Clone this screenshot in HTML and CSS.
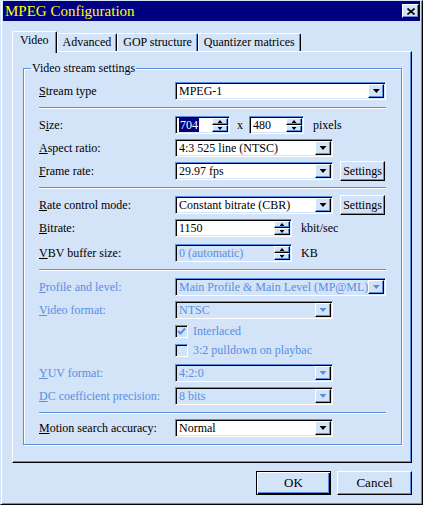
FILE: index.html
```html
<!DOCTYPE html>
<html lang="en">
<head>
  <meta charset="UTF-8">
  <title>MPEG Configuration</title>
  <link rel="stylesheet" href="styles.css">
</head>
<body>
  <div class="window">
    <div class="titlebar">
      <span class="title">MPEG Configuration</span>
      <span class="close">
        <svg width="8" height="7" viewBox="0 0 8 7"><path d="M0.5 0.5 L7.5 6.5 M7.5 0.5 L0.5 6.5" stroke="#000" stroke-width="1.6" fill="none"/></svg>
      </span>
    </div>

    <div class="tabs">
      <div class="tab active">Video</div>
      <div class="tab">Advanced</div>
      <div class="tab">GOP structure</div>
      <div class="tab">Quantizer matrices</div>
    </div>

    <div class="panel">
      <fieldset class="group">
        <legend>Video stream settings</legend>
        <div class="rows">
          <div class="row">
            <span class="lbl"><u>S</u>tream type</span>
            <div class="combo fill"><span class="value">MPEG-1</span><span class="drop"><i></i></span></div>
          </div>
          <div class="sep"></div>
          <div class="row">
            <span class="lbl">S<u>i</u>ze:</span>
            <div class="combo spin small"><span class="value"><span class="hl">704</span></span><span class="spinbtn"><span class="up"><i></i></span><span class="down"><i></i></span></span></div>
            <span class="times">x</span>
            <div class="combo spin small"><span class="value">480</span><span class="spinbtn"><span class="up"><i></i></span><span class="down"><i></i></span></span></div>
            <span class="unit">pixels</span>
          </div>
          <div class="row">
            <span class="lbl"><u>A</u>spect ratio:</span>
            <div class="combo mid"><span class="value">4:3 525 line (NTSC)</span><span class="drop"><i></i></span></div>
          </div>
          <div class="row">
            <span class="lbl"><u>F</u>rame rate:</span>
            <div class="combo mid"><span class="value">29.97 fps</span><span class="drop"><i></i></span></div>
            <span class="btn settings">Settings</span>
          </div>
          <div class="sep"></div>
          <div class="row">
            <span class="lbl"><u>R</u>ate control mode:</span>
            <div class="combo mid"><span class="value">Constant bitrate (CBR)</span><span class="drop"><i></i></span></div>
            <span class="btn settings">Settings</span>
          </div>
          <div class="row">
            <span class="lbl"><u>B</u>itrate:</span>
            <div class="combo spin long"><span class="value">1150</span><span class="spinbtn"><span class="up"><i></i></span><span class="down"><i></i></span></span></div>
            <span class="unit">kbit/sec</span>
          </div>
          <div class="row push2">
            <span class="lbl"><u>V</u>BV buffer size:</span>
            <div class="combo spin long off"><span class="value">0 (automatic)</span><span class="spinbtn"><span class="up"><i></i></span><span class="down"><i></i></span></span></div>
            <span class="unit">KB</span>
          </div>
          <div class="sep"></div>
          <div class="row dis">
            <span class="lbl"><u>P</u>rofile and level:</span>
            <div class="combo fill off"><span class="value">Main Profile &amp; Main Level (MP@ML)</span><span class="drop"><i></i></span></div>
          </div>
          <div class="row dis">
            <span class="lbl"><u>V</u>ideo format:</span>
            <div class="combo mid off"><span class="value">NTSC</span><span class="drop"><i></i></span></div>
          </div>
          <div class="row check dis">
            <span class="box"><svg width="9" height="9" viewBox="0 0 9 9"><path d="M1 4 L3.5 6.5 L8 1.5" stroke="#5a8fdf" stroke-width="2" fill="none"/></svg></span>
            <span>Interlaced</span>
          </div>
          <div class="row check dis">
            <span class="box"></span>
            <span>3:2 pulldown on playbac</span>
          </div>
          <div class="row dis push2">
            <span class="lbl"><u>Y</u>UV format:</span>
            <div class="combo mid off"><span class="value">4:2:0</span><span class="drop"><i></i></span></div>
          </div>
          <div class="row dis">
            <span class="lbl"><u>D</u>C coefficient precision:</span>
            <div class="combo mid off"><span class="value">8 bits</span><span class="drop"><i></i></span></div>
          </div>
          <div class="sep last"></div>
          <div class="row">
            <span class="lbl"><u>M</u>otion search accuracy:</span>
            <div class="combo mid"><span class="value">Normal</span><span class="drop"><i></i></span></div>
          </div>
        </div>
      </fieldset>
    </div>

    <div class="footer">
      <span class="btn big default">OK</span>
      <span class="btn big">Cancel</span>
    </div>
  </div>
</body>
</html>
```

FILE: styles.css
```css
* {
  box-sizing: border-box;
}
body {
  margin: 0;
  font-family: "Liberation Serif", serif;
  font-size: 12px;
  color: #000;
  background: #d3e3f8;
}
.window {
  width: 423px;
  height: 505px;
  background: #d3e3f8;
  border: 1px solid;
  border-color: #d3e3f8 #000 #000 #d3e3f8;
  box-shadow: inset 1px 0 #fff, inset -1px -1px #5a8fdf;
  padding: 0 2px;
}
.titlebar {
  height: 20px;
  background: #000080;
  display: flex;
  align-items: center;
  justify-content: space-between;
  padding: 0 1px 0 2px;
}
.title {
  color: #ffff00;
  font-size: 15px;
  line-height: 18px;
}
.close {
  width: 17px;
  height: 14px;
  display: flex;
  align-items: center;
  justify-content: center;
  background: #d3e3f8;
  border: 1px solid;
  border-color: #fff #000 #000 #fff;
  box-shadow: inset -1px -1px #5a8fdf;
}

/* tabs */
.tabs {
  display: flex;
  align-items: flex-end;
  height: 20px;
  margin-top: 10px;
  padding-left: 9px;
}
.tab {
  height: 18px;
  padding: 0 5px;
  line-height: 17px;
  border: 1px solid;
  border-bottom: none;
  border-color: #fff #000 transparent #fff;
  box-shadow: inset -1px 0 #5a8fdf;
  border-radius: 2px 2px 0 0;
  white-space: nowrap;
}
.tab.active {
  height: 22px;
  padding: 0 7px;
  line-height: 17px;
  margin-bottom: -2px;
  background: #d3e3f8;
  position: relative;
  z-index: 1;
}

.panel {
  margin-left: 9px;
  width: 400px;
  height: 412px;
  border: 1px solid;
  border-color: #fff #000 #000 #fff;
  box-shadow: inset -1px -1px #5a8fdf;
  padding: 9px 0 0 10px;
}
.group {
  margin: 0;
  padding: 0;
  width: 376px;
  height: 384px;
  border: 1px solid #5a8fdf;
  box-shadow: inset 1px 1px #fff, 1px 1px #fff;
}
.group legend {
  margin-left: 7px;
  padding: 0 1px;
  line-height: 14px;
}
.rows {
  display: flex;
  flex-direction: column;
  gap: 5px;
  padding: 7px 15px 0 15px;
}
.row {
  display: flex;
  align-items: center;
  height: 18px;
}
.row.push2 {
  margin-top: 2px;
}
.row.check {
  height: 14px;
  padding-left: 136px;
}
.lbl {
  width: 136px;
  flex: none;
  white-space: nowrap;
}
.dis {
  color: #5a8fdf;
}
.sep {
  height: 2px;
  margin: 2px 0;
  border-top: 1px solid #5a8fdf;
  border-bottom: 1px solid #fff;
}
.sep.last {
  margin-bottom: 0;
}

/* combo boxes and spin edits */
.combo {
  height: 18px;
  display: flex;
  background: #fff;
  border: 1px solid;
  border-color: #5a8fdf #fff #fff #5a8fdf;
  box-shadow: inset 1px 1px #000, inset -1px -1px #d3e3f8;
  padding: 1px;
}
.combo.off {
  background: #d3e3f8;
  color: #5a8fdf;
}
.combo.fill {
  flex: 1;
}
.combo.mid {
  width: 158px;
}
.combo.small {
  width: 55px;
}
.combo.long {
  width: 117px;
}
.value {
  flex: 1;
  padding-left: 2px;
  line-height: 15px;
  white-space: nowrap;
  overflow: hidden;
}
.hl {
  background: #000080;
  color: #fff;
  padding: 0 1px;
}
.drop,
.up,
.down {
  display: flex;
  align-items: center;
  justify-content: center;
  background: #d3e3f8;
  border: 1px solid;
  border-color: #fff #000 #000 #fff;
  box-shadow: inset -1px -1px #5a8fdf;
}
.drop {
  width: 16px;
  flex: none;
}
.drop i {
  width: 7px;
  height: 4px;
  background: #000;
  clip-path: polygon(0 0, 100% 0, 50% 100%);
}
.spinbtn {
  width: 16px;
  flex: none;
  display: flex;
  flex-direction: column;
}
.up,
.down {
  flex: 1;
}
.up i,
.down i {
  width: 5px;
  height: 3px;
  background: #000;
}
.up i {
  clip-path: polygon(50% 0, 100% 100%, 0 100%);
}
.down i {
  clip-path: polygon(0 0, 100% 0, 50% 100%);
}
.off .drop i {
  background: #5a8fdf;
}
.times {
  margin: 0 6px 0 7px;
}
.unit {
  margin-left: 9px;
}

/* buttons */
.btn {
  display: flex;
  align-items: center;
  justify-content: center;
  background: #d3e3f8;
  border: 1px solid;
  border-color: #fff #000 #000 #fff;
  box-shadow: inset -1px -1px #5a8fdf;
}
.settings {
  width: 45px;
  height: 20px;
  flex: none;
  margin: -1px -2px -1px 7px;
}
.footer {
  display: flex;
  justify-content: flex-end;
  gap: 6px;
  padding: 8px 8px 0 0;
}
.big {
  width: 75px;
  height: 24px;
  font-size: 13px;
}
.btn.default {
  border-color: #000;
  box-shadow: inset 1px 1px #fff, inset -1px -1px #000, inset -2px -2px #5a8fdf;
}
.box {
  width: 13px;
  height: 13px;
  margin-right: 5px;
  display: flex;
  align-items: center;
  justify-content: center;
  border: 1px solid;
  border-color: #5a8fdf #fff #fff #5a8fdf;
  box-shadow: inset 1px 1px #000, inset -1px -1px #d3e3f8;
}
```
